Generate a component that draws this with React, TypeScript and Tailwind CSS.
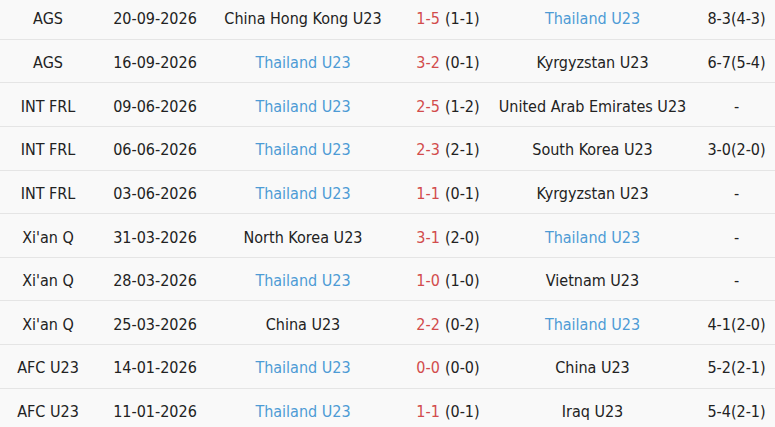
import React from "react";

type Row = {
  league: string;
  date: string;
  home: string;
  homeBlue: boolean;
  score: string;
  half: string;
  away: string;
  awayBlue: boolean;
  extra: string;
};

const rows: Row[] = [
  { league: "AGS", date: "20-09-2026", home: "China Hong Kong U23", homeBlue: false, score: "1-5", half: "(1-1)", away: "Thailand U23", awayBlue: true, extra: "8-3(4-3)" },
  { league: "AGS", date: "16-09-2026", home: "Thailand U23", homeBlue: true, score: "3-2", half: "(0-1)", away: "Kyrgyzstan U23", awayBlue: false, extra: "6-7(5-4)" },
  { league: "INT FRL", date: "09-06-2026", home: "Thailand U23", homeBlue: true, score: "2-5", half: "(1-2)", away: "United Arab Emirates U23", awayBlue: false, extra: "-" },
  { league: "INT FRL", date: "06-06-2026", home: "Thailand U23", homeBlue: true, score: "2-3", half: "(2-1)", away: "South Korea U23", awayBlue: false, extra: "3-0(2-0)" },
  { league: "INT FRL", date: "03-06-2026", home: "Thailand U23", homeBlue: true, score: "1-1", half: "(0-1)", away: "Kyrgyzstan U23", awayBlue: false, extra: "-" },
  { league: "Xi'an Q", date: "31-03-2026", home: "North Korea U23", homeBlue: false, score: "3-1", half: "(2-0)", away: "Thailand U23", awayBlue: true, extra: "-" },
  { league: "Xi'an Q", date: "28-03-2026", home: "Thailand U23", homeBlue: true, score: "1-0", half: "(1-0)", away: "Vietnam U23", awayBlue: false, extra: "-" },
  { league: "Xi'an Q", date: "25-03-2026", home: "China U23", homeBlue: false, score: "2-2", half: "(0-2)", away: "Thailand U23", awayBlue: true, extra: "4-1(2-0)" },
  { league: "AFC U23", date: "14-01-2026", home: "Thailand U23", homeBlue: true, score: "0-0", half: "(0-0)", away: "China U23", awayBlue: false, extra: "5-2(2-1)" },
  { league: "AFC U23", date: "11-01-2026", home: "Thailand U23", homeBlue: true, score: "1-1", half: "(0-1)", away: "Iraq U23", awayBlue: false, extra: "5-4(2-1)" },
];

function Cell({ children }: { children: React.ReactNode }) {
  return <div className="flex items-center justify-center whitespace-nowrap">{children}</div>;
}

export default function App() {
  return (
    <div
      className="w-[775px] h-[427px] overflow-hidden bg-[#f9f9f9] text-[16px] text-[#222222]"
      style={{ fontFamily: '"DejaVu Sans Condensed", "DejaVu Sans", sans-serif', fontStretch: "condensed" }}
    >
      <div className="-mt-[4px] flex flex-col">
        {rows.map((r, i) => (
          <div
            key={i}
            className="grid grid-cols-[96px_118px_178px_112px_177px_111px] h-[43.65px] pt-[4px] border-b border-[#e5e5e5] shrink-0"
          >
            <Cell>{r.league}</Cell>
            <Cell>{r.date}</Cell>
            <Cell>
              <span className={r.homeBlue ? "text-[#4d9bd5]" : ""}>{r.home}</span>
            </Cell>
            <Cell>
              <span className="text-[#d24c4c]">{r.score}</span>
              <span className="ml-[5px]">{r.half}</span>
            </Cell>
            <Cell>
              <span className={r.awayBlue ? "text-[#4d9bd5]" : ""}>{r.away}</span>
            </Cell>
            <Cell>{r.extra}</Cell>
          </div>
        ))}
      </div>
    </div>
  );
}
